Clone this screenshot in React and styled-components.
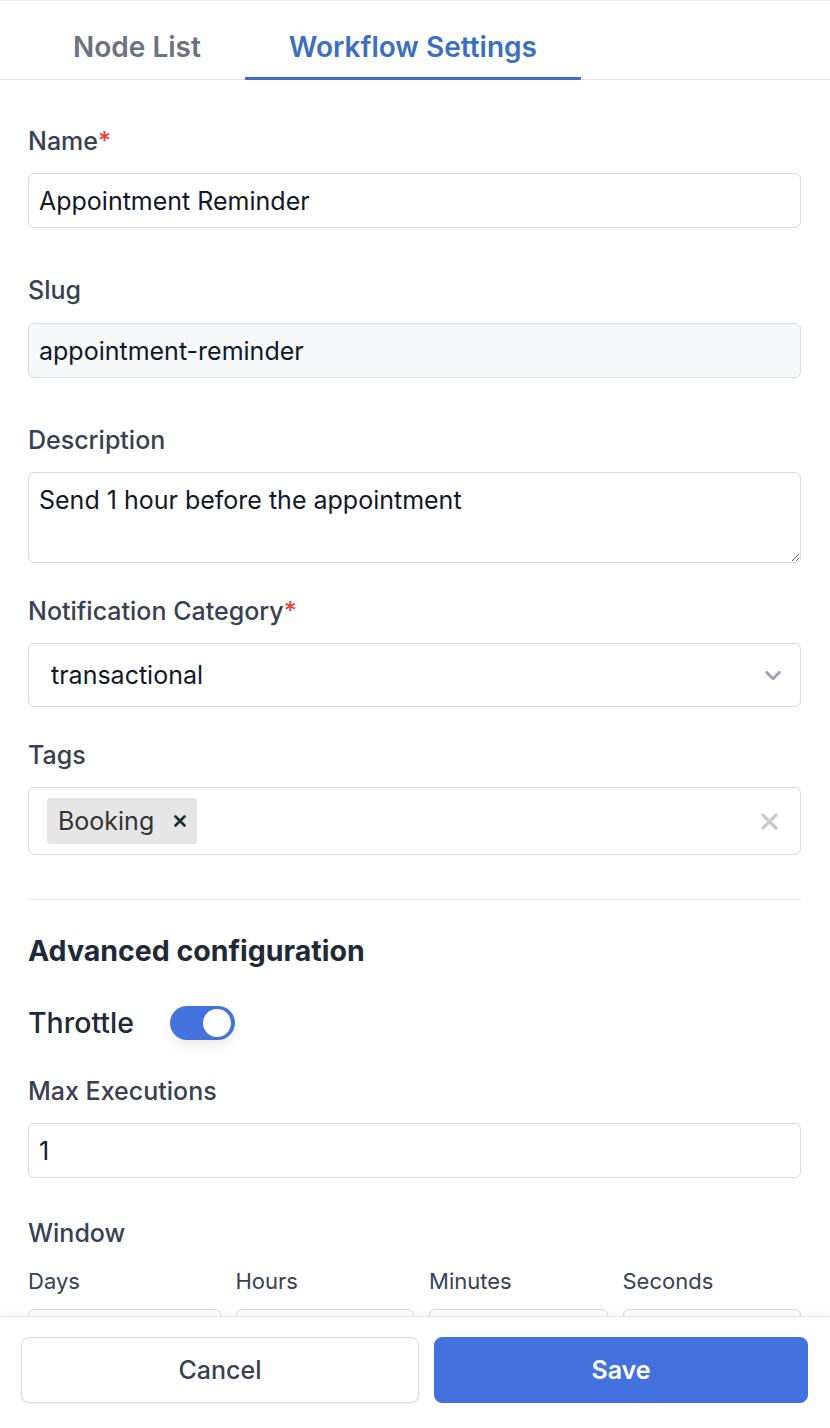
import React from "react";
import styled, { createGlobalStyle } from "styled-components";

const Global = createGlobalStyle`
  * { box-sizing: border-box; }
  html, body { margin: 0; padding: 0; background: #fff; }
  body { font-family: Inter, "Noto Sans", sans-serif; color: #111827; }
`;

const Page = styled.div`
  height: 1428px;
  display: flex;
  flex-direction: column;
  overflow: hidden;
  border-top: 1px solid #ececec;
`;

const TabBar = styled.div`
  display: flex;
  padding-left: 29px;
  border-bottom: 1px solid #e5e7eb;
  height: 79px;
  flex-shrink: 0;
`;

const Tab = styled.div`
  padding: 16px 44px 0;
  display: flex;
  align-items: center;
  font-size: 28px;
  font-weight: 600;
  color: ${(p) => (p.$active ? "#3a6fc3" : "#6b7280")};
  border-bottom: 3px solid ${(p) => (p.$active ? "#3a6fc3" : "transparent")};
  margin-bottom: -1px;
`;

const Scroll = styled.div`
  flex: 1;
  overflow: hidden;
  padding: 45px 29px 0 28px;
  display: flex;
  flex-direction: column;
`;

const Field = styled.div`
  display: flex;
  flex-direction: column;
  gap: ${(p) => p.$gap ?? 16}px;
  margin-bottom: ${(p) => p.$mb ?? 32}px;
`;

const Label = styled.div`
  font-size: 25px;
  line-height: 32px;
  font-weight: 500;
  color: #374151;
`;

const Req = styled.span`
  color: #e53e3e;
`;

const TextInput = styled.input`
  height: 55px;
  width: 100%;
  border: 1px solid #d9dbde;
  border-radius: 6px;
  padding: 0 10px;
  font-family: inherit;
  font-size: 25px;
  color: #111827;
  background: ${(p) => (p.$disabled ? "#f7f8fa" : "#fff")};
  outline: none;
`;

const TextArea = styled.textarea`
  height: 91px;
  width: 100%;
  border: 1px solid #d9dbde;
  border-radius: 6px;
  padding: 11px 10px;
  font-family: inherit;
  font-size: 25px;
  line-height: 32px;
  color: #111827;
  resize: vertical;
  outline: none;
`;

const SelectBox = styled.div`
  height: 64px;
  border: 1px solid #d9dbde;
  border-radius: 6px;
  padding: 0 16px 0 22px;
  display: flex;
  align-items: center;
  justify-content: space-between;
  font-size: 25px;
  color: #111827;
`;

const TagsBox = styled.div`
  height: 68px;
  border: 1px solid #d9dbde;
  border-radius: 6px;
  padding: 0 22px 0 18px;
  display: flex;
  align-items: center;
  justify-content: space-between;
`;

const Chip = styled.div`
  height: 46px;
  background: #e6e6e6;
  border-radius: 3px;
  display: flex;
  align-items: center;
  gap: 20px;
  padding: 0 11px 0 11px;
  font-size: 25px;
  color: #333;
`;

const Divider = styled.hr`
  border: none;
  border-top: 1px solid #e5e7eb;
  margin: 44px 0 33px;
  width: 100%;
`;

const Heading = styled.h2`
  margin: 0 0 36px;
  font-size: 28.5px;
  line-height: 36px;
  font-weight: 650;
  color: #1f2937;
`;

const ToggleRow = styled.div`
  display: flex;
  align-items: center;
  gap: 36px;
  height: 36px;
  margin-bottom: 35px;
  font-size: 28.5px;
  font-weight: 500;
  color: #1f2937;
`;

const Switch = styled.div`
  width: 65px;
  height: 34px;
  border-radius: 17px;
  background: #4473de;
  position: relative;
  box-shadow: 0 6px 14px rgba(0, 0, 0, 0.08);
  &::after {
    content: "";
    position: absolute;
    right: 4px;
    top: 3px;
    width: 28px;
    height: 28px;
    border-radius: 50%;
    background: #fff;
  }
`;

const SubGrid = styled.div`
  display: grid;
  grid-template-columns: 192fr 178fr 178fr 178fr;
  column-gap: 15px;
  row-gap: 14px;
`;

const SubLabel = styled.div`
  font-size: 22px;
  line-height: 28px;
  color: #374151;
`;

const SmallInput = styled.div`
  height: 55px;
  border: 1px solid #d9dbde;
  border-radius: 6px;
`;

const Footer = styled.div`
  flex-shrink: 0;
  height: 112px;
  border-top: 1px solid #e5e7eb;
  box-shadow: 0 -3px 8px rgba(0, 0, 0, 0.04);
  background: #fff;
  display: grid;
  grid-template-columns: 398fr 374fr;
  column-gap: 15px;
  padding: 20px 22px 0 21px;
  align-items: start;
  position: relative;
  z-index: 1;
`;

const Button = styled.button`
  height: 66px;
  border-radius: 8px;
  font-family: inherit;
  font-size: 25px;
  font-weight: ${(p) => (p.$primary ? 600 : 500)};
  color: ${(p) => (p.$primary ? "#fff" : "#374151")};
  background: ${(p) => (p.$primary ? "#4372de" : "#fff")};
  border: 1px solid ${(p) => (p.$primary ? "#4372de" : "#d9dbde")};
  box-shadow: ${(p) => (p.$primary ? "none" : "0 1px 3px rgba(0,0,0,0.06)")};
`;

export default function App() {
  return (
    <>
      <Global />
      <Page>
        <TabBar>
          <Tab>Node List</Tab>
          <Tab $active>Workflow Settings</Tab>
        </TabBar>
        <Scroll>
          <Field $mb={46}>
            <Label>
              Name<Req>*</Req>
            </Label>
            <TextInput defaultValue="Appointment Reminder" />
          </Field>
          <Field $mb={46} $gap={17}>
            <Label>Slug</Label>
            <TextInput $disabled defaultValue="appointment-reminder" />
          </Field>
          <Field>
            <Label>Description</Label>
            <TextArea defaultValue="Send 1 hour before the appointment" />
          </Field>
          <Field>
            <Label>
              Notification Category<Req>*</Req>
            </Label>
            <SelectBox>
              <span>transactional</span>
              <svg width="22" height="22" viewBox="0 0 24 24" fill="none" stroke="#9ca3af" strokeWidth="3" strokeLinecap="round" strokeLinejoin="round">
                <path d="M5 9l7 7 7-7" />
              </svg>
            </SelectBox>
          </Field>
          <Field $mb={0}>
            <Label>Tags</Label>
            <TagsBox>
              <Chip>
                Booking
                <svg width="12" height="12" viewBox="0 0 12 12" stroke="#1f2937" strokeWidth="2.6" strokeLinecap="round">
                  <path d="M1.5 1.5l9 9M10.5 1.5l-9 9" />
                </svg>
              </Chip>
              <svg width="17" height="17" viewBox="0 0 17 17" stroke="#cccccc" strokeWidth="3.4" strokeLinecap="round">
                <path d="M2 2l13 13M15 2L2 15" />
              </svg>
            </TagsBox>
          </Field>
          <Divider />
          <Heading>Advanced configuration</Heading>
          <ToggleRow>
            Throttle
            <Switch />
          </ToggleRow>
          <Field $mb={39}>
            <Label>Max Executions</Label>
            <TextInput defaultValue="1" />
          </Field>
          <Field $mb={18}>
            <Label>Window</Label>
          </Field>
          <SubGrid>
            <SubLabel>Days</SubLabel>
            <SubLabel>Hours</SubLabel>
            <SubLabel>Minutes</SubLabel>
            <SubLabel>Seconds</SubLabel>
            <SmallInput />
            <SmallInput />
            <SmallInput />
            <SmallInput />
          </SubGrid>
        </Scroll>
        <Footer>
          <Button>Cancel</Button>
          <Button $primary>Save</Button>
        </Footer>
      </Page>
    </>
  );
}
